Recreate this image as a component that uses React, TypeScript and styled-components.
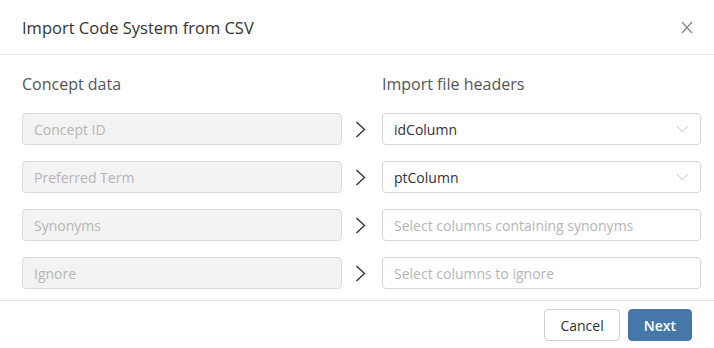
import { Fragment } from "react";
import styled, { createGlobalStyle } from "styled-components";

const GlobalStyle = createGlobalStyle`
  html, body {
    margin: 0;
    padding: 0;
    background: #fff;
  }
  body {
    font-family: "Open Sans", "Liberation Sans", sans-serif;
    color: #333;
  }
`;

const Dialog = styled.div`
  width: 714px;
  height: 348px;
  background: #fff;
  display: flex;
  flex-direction: column;
  overflow: hidden;
`;

const Header = styled.div`
  display: flex;
  align-items: center;
  justify-content: space-between;
  padding: 0 20px 0 22px;
  border-bottom: 1px solid #e5e5e5;
  box-sizing: border-box;
  flex: 0 0 55px;

  h1 {
    margin: 0;
    font-size: 16.5px;
    font-weight: 400;
    color: #333;
  }
`;

const CloseButton = styled.button`
  border: none;
  background: none;
  padding: 0;
  width: 14px;
  height: 14px;
  display: flex;
  align-items: center;
  justify-content: center;
  cursor: pointer;
`;

const Body = styled.div`
  display: grid;
  grid-template-columns: 320px 40px 1fr;
  grid-template-rows: 24px;
  grid-auto-rows: 32px;
  row-gap: 16px;
  padding: 18px 13px 11px 22px;
  border-bottom: 1px solid #e5e5e5;
`;

const ColumnTitle = styled.div`
  font-size: 16px;
  line-height: 22px;
  color: #555;
`;

const Field = styled.div<{ disabled?: boolean }>`
  height: 32px;
  box-sizing: border-box;
  border: 1px solid ${(p) => (p.disabled ? "#dcdcdc" : "#d6d6d6")};
  border-radius: 4px;
  background: ${(p) => (p.disabled ? "#f3f3f3" : "#fff")};
  display: flex;
  align-items: center;
  justify-content: space-between;
  padding: 0 12px 0 11px;
  font-size: 14px;
`;

const Value = styled.span<{ $muted?: boolean }>`
  color: ${(p) => (p.$muted ? "#b5b5b5" : "#333")};
  font-size: 14px;
`;

const ArrowCell = styled.div`
  display: flex;
  align-items: center;
  justify-content: center;
  padding-right: 3px;
`;

const Footer = styled.div`
  display: flex;
  justify-content: flex-end;
  gap: 8px;
  padding: 8px 22px;
`;

const Button = styled.button<{ $primary?: boolean }>`
  height: 32px;
  box-sizing: border-box;
  border-radius: 4px;
  font-family: inherit;
  font-size: 14px;
  padding: 0 15px;
  cursor: pointer;
  border: 1px solid ${(p) => (p.$primary ? "#4677a8" : "#d0d0d0")};
  background: ${(p) => (p.$primary ? "#4677a8" : "#fff")};
  color: ${(p) => (p.$primary ? "#fff" : "#333")};
  font-weight: ${(p) => (p.$primary ? 600 : 400)};
`;

const Chevron = () => (
  <svg width="11" height="17" viewBox="0 0 11 17">
    <polyline points="1.5,1 9.5,8.5 1.5,16" fill="none" stroke="#333" strokeWidth="1.4" />
  </svg>
);

const Caret = () => (
  <svg width="11" height="7" viewBox="0 0 11 7">
    <polyline points="0.5,0.5 5.5,6 10.5,0.5" fill="none" stroke="#c4c4c4" strokeWidth="1" />
  </svg>
);

const CloseIcon = () => (
  <svg width="12" height="13" viewBox="0 0 12 13">
    <path d="M1 1 L11 12 M11 1 L1 12" stroke="#888" strokeWidth="1.3" fill="none" />
  </svg>
);

const rows = [
  { concept: "Concept ID", value: "idColumn", select: true },
  { concept: "Preferred Term", value: "ptColumn", select: true },
  { concept: "Synonyms", value: "Select columns containing synonyms", select: false },
  { concept: "Ignore", value: "Select columns to ignore", select: false },
];

export default function App() {
  return (
    <>
      <GlobalStyle />
      <Dialog>
        <Header>
          <h1>Import Code System from CSV</h1>
          <CloseButton aria-label="Close">
            <CloseIcon />
          </CloseButton>
        </Header>
        <Body>
          <ColumnTitle>Concept data</ColumnTitle>
          <div />
          <ColumnTitle>Import file headers</ColumnTitle>
          {rows.map((r) => (
            <Fragment key={r.concept}>
              <Field disabled>
                <Value $muted>{r.concept}</Value>
              </Field>
              <ArrowCell>
                <Chevron />
              </ArrowCell>
              <Field>
                <Value $muted={!r.select}>{r.value}</Value>
                {r.select && <Caret />}
              </Field>
            </Fragment>
          ))}
        </Body>
        <Footer>
          <Button>Cancel</Button>
          <Button $primary>Next</Button>
        </Footer>
      </Dialog>
    </>
  );
}
